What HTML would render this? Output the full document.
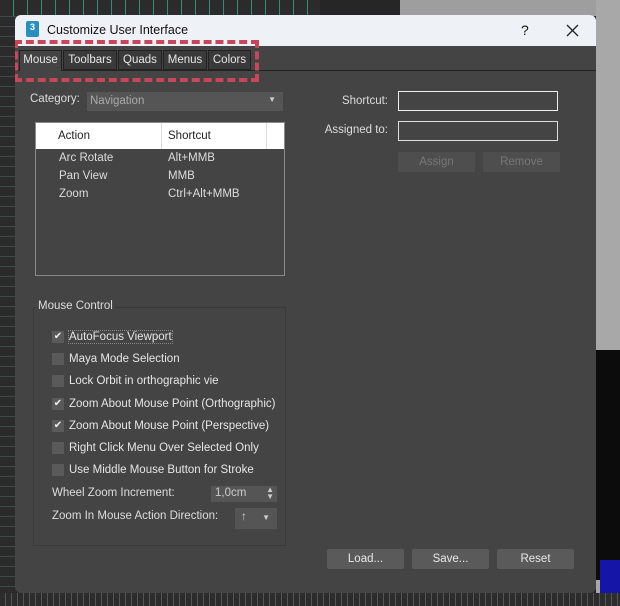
<!DOCTYPE html>
<html><head><meta charset="utf-8"><style>
*{box-sizing:border-box;margin:0;padding:0}
body{width:620px;height:606px;overflow:hidden;position:relative;font-family:"Liberation Sans",sans-serif;font-size:11.5px;color:#ddd;
background:#262626;}
.bgl{position:absolute;left:0;top:0;width:40px;height:606px;background:repeating-linear-gradient(0deg,#2b2b2b 0 9px,#3c4a48 9px 10px)}
.bgt{position:absolute;left:0;top:0;width:320px;height:16px;background:repeating-linear-gradient(90deg,#2b2b2b 0 13px,#2f8f7a 13px 14px)}
.bgr{position:absolute;left:596px;top:0;width:24px;height:606px;background:#a8a8a8}
.bgr2{position:absolute;left:596px;top:350px;width:24px;height:230px;background:#0c0c0c}
.bgb{position:absolute;left:600px;top:560px;width:20px;height:46px;background:#1515a8}
.bgbot{position:absolute;left:0;top:593px;width:620px;height:13px;background:repeating-linear-gradient(90deg,#2c2c2c 0 5px,#555 5px 6px)}
.bgtr{position:absolute;left:400px;top:0;width:220px;height:16px;background:#9e9e9e}
.dlg{position:absolute;left:15px;top:15px;width:581px;height:578px;background:#444;border-radius:6px;overflow:hidden}
.title{position:absolute;left:0;top:0;width:581px;height:31px;background:#eef2f7;color:#111;font-size:12.5px}
.abs{position:absolute}
.tab{position:absolute;top:35px;height:20px;border:1px solid #222;background:#3a3a3a;color:#e6e6e6;font-size:11.5px;text-align:center;line-height:18px}
.btn{position:absolute;height:20px;background:#5a5a5a;border-radius:2px;text-align:center;line-height:20px;color:#e8e8e8}
.cb{position:absolute;left:37px;width:12px;height:12px;background:#5a5a5a;font-size:10px;line-height:12px;text-align:center;color:#eee}
.lbl{position:absolute;left:54px;color:#e6e6e6}
</style></head><body>
<div class="bgl"></div><div class="bgt"></div><div class="bgtr"></div><div class="bgr"></div><div class="bgr2"></div><div class="bgb"></div><div class="bgbot"></div>
<div class="dlg">
 <div class="title">
  <div class="abs" style="left:11px;top:6px;width:13px;height:16px;background:#2a8fbf;border-radius:2px;color:#fff;font-size:9px;text-align:center;line-height:12px;font-weight:bold">3</div>
  <div class="abs" style="left:32px;top:8px">Customize User Interface</div>
  <div class="abs" style="left:506px;top:7px;font-size:14px">?</div>
  <svg class="abs" style="left:551px;top:9px" width="13" height="13"><path d="M1 1L12 12M12 1L1 12" stroke="#222" stroke-width="1.3"/></svg>
 </div>
 <div class="abs" style="left:0;top:55px;width:581px;height:1px;background:#222"></div>
 <div class="tab" style="left:4px;width:43px;background:#444;border-bottom:none;height:21px">Mouse</div>
 <div class="tab" style="left:48px;width:54px">Toolbars</div>
 <div class="tab" style="left:103px;width:44px">Quads</div>
 <div class="tab" style="left:148px;width:44px">Menus</div>
 <div class="tab" style="left:193px;width:43px">Colors</div>
 <div class="abs" style="left:-1px;top:25px;width:245px;height:42px;border:4px dashed #c8465a"></div>

 <div class="abs" style="left:15px;top:78px">Category:</div>
 <div class="abs" style="left:72px;top:77px;width:196px;height:19px;background:#555;color:#aaa;padding:3px 0 0 3px">Navigation<span style="position:absolute;right:7px;top:3px;font-size:8px;color:#ccc">▼</span></div>

 <div class="abs" style="left:20px;top:107px;width:250px;height:154px;border:1px solid #8a8a8a">
  <div class="abs" style="left:0;top:0;width:248px;height:26px;background:#fff;color:#222">
   <div class="abs" style="left:22px;top:7px">Action</div>
   <div class="abs" style="left:125px;top:0;width:1px;height:26px;background:#ddd"></div>
   <div class="abs" style="left:132px;top:7px">Shortcut</div>
   <div class="abs" style="left:230px;top:0;width:1px;height:26px;background:#ddd"></div>
  </div>
  <div class="abs" style="left:23px;top:29px">Arc Rotate</div><div class="abs" style="left:132px;top:29px">Alt+MMB</div>
  <div class="abs" style="left:23px;top:47px">Pan View</div><div class="abs" style="left:132px;top:47px">MMB</div>
  <div class="abs" style="left:23px;top:65px">Zoom</div><div class="abs" style="left:132px;top:65px">Ctrl+Alt+MMB</div>
 </div>

 <div class="abs" style="left:300px;top:80px;width:73px;text-align:right">Shortcut:</div>
 <div class="abs" style="left:383px;top:76px;width:160px;height:20px;border:1.5px solid #eee"></div>
 <div class="abs" style="left:300px;top:109px;width:73px;text-align:right">Assigned to:</div>
 <div class="abs" style="left:383px;top:106px;width:160px;height:20px;border:1px solid #ddd"></div>
 <div class="btn" style="left:383px;top:137px;width:77px;background:#4e4e4e;color:#777">Assign</div>
 <div class="btn" style="left:468px;top:137px;width:77px;background:#4e4e4e;color:#777">Remove</div>

 <div class="abs" style="left:18px;top:292px;width:253px;height:239px;border:1px solid #3a3a3a"></div>
 <div class="abs" style="left:21px;top:285px;background:#444;padding:0 2px">Mouse Control</div>
 <div class="cb" style="top:316px">✔</div><div class="lbl" style="top:316px;outline:1px dotted #888">AutoFocus Viewport</div>
 <div class="cb" style="top:338px"></div><div class="lbl" style="top:338px">Maya Mode Selection</div>
 <div class="cb" style="top:360px"></div><div class="lbl" style="top:360px">Lock Orbit in orthographic vie</div>
 <div class="cb" style="top:383px">✔</div><div class="lbl" style="top:383px">Zoom About Mouse Point (Orthographic)</div>
 <div class="cb" style="top:405px">✔</div><div class="lbl" style="top:405px">Zoom About Mouse Point (Perspective)</div>
 <div class="cb" style="top:427px"></div><div class="lbl" style="top:427px">Right Click Menu Over Selected Only</div>
 <div class="cb" style="top:449px"></div><div class="lbl" style="top:449px">Use Middle Mouse Button for Stroke</div>
 <div class="abs" style="left:37px;top:472px">Wheel Zoom Increment:</div>
 <div class="abs" style="left:196px;top:471px;width:66px;height:16px;background:#555;padding:1px 0 0 4px;color:#ccc">1,0cm<span style="position:absolute;right:3px;top:0;font-size:8px;line-height:7px">▲<br>▼</span></div>
 <div class="abs" style="left:37px;top:495px">Zoom In Mouse Action Direction:</div>
 <div class="abs" style="left:220px;top:493px;width:42px;height:21px;background:#555;color:#ccc"><span style="position:absolute;left:6px;top:3px">↑</span><span style="position:absolute;right:7px;top:5px;font-size:8px">▼</span></div>

 <div class="btn" style="left:312px;top:534px;width:77px">Load...</div>
 <div class="btn" style="left:397px;top:534px;width:77px">Save...</div>
 <div class="btn" style="left:482px;top:534px;width:77px">Reset</div>
</div>
</body></html>
